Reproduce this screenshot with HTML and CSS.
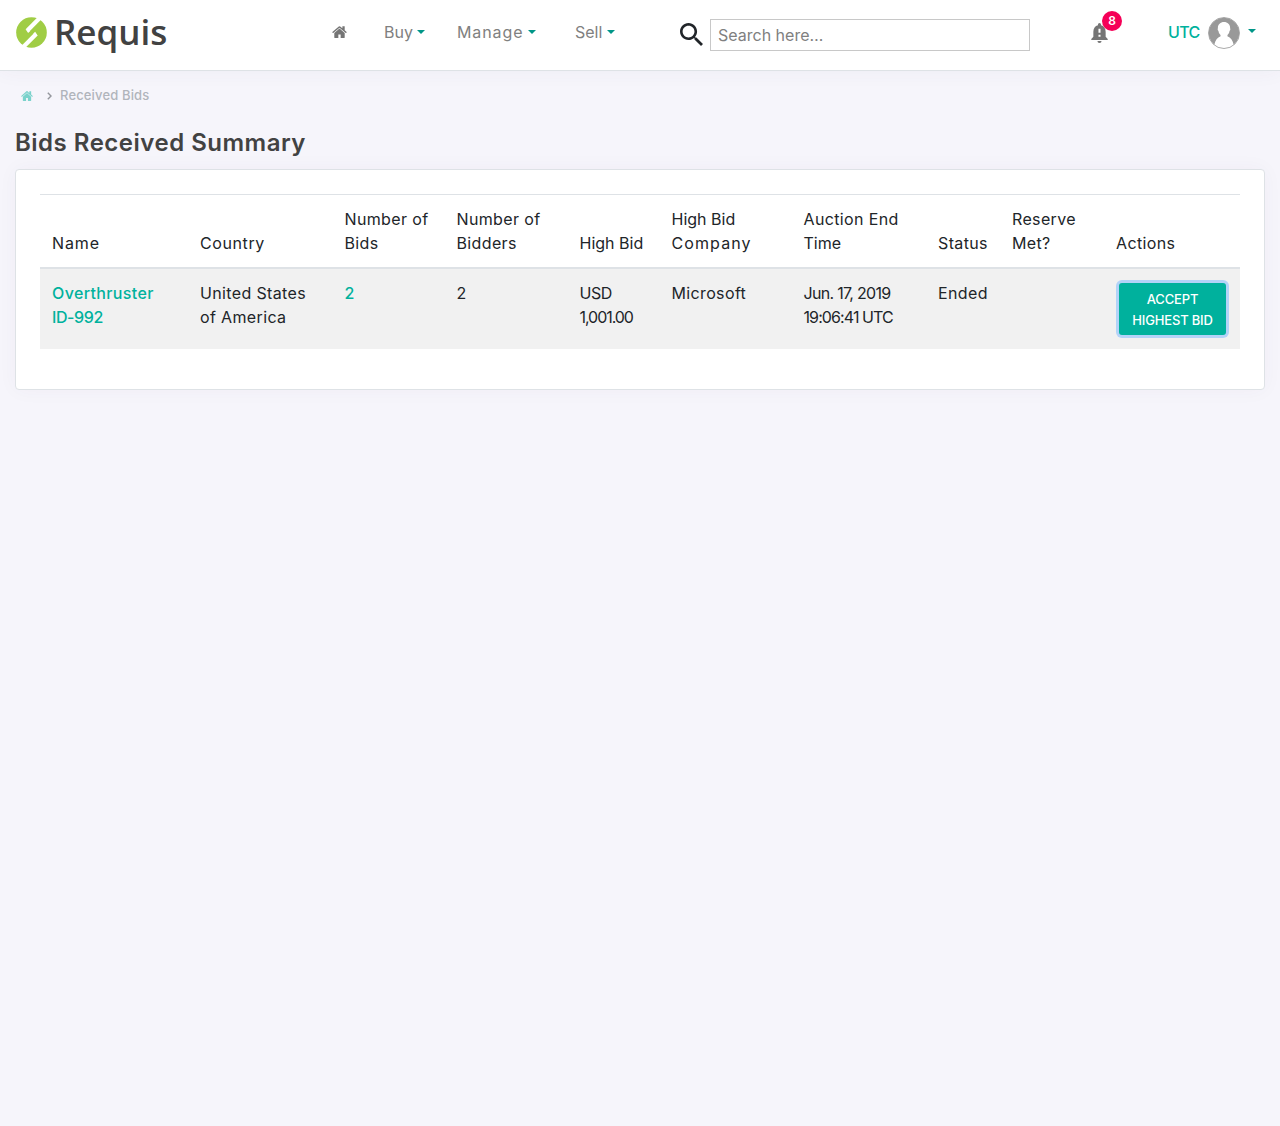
FILE: index.html
```html
<!DOCTYPE html>
<html lang="en">
<head>
<meta charset="utf-8">
<title>Bids Received Summary - Requis</title>
<link rel="stylesheet" href="styles.css">
</head>
<body>
<svg class="defs" width="0" height="0" aria-hidden="true">
  <symbol id="home" viewBox="0 110 1664 1300" preserveAspectRatio="none"><path d="M1408 864v480q0 26-19 45t-45 19H960v-384H704v384H320q-26 0-45-19t-19-45V864q0-1 .5-3t.5-3l575-474 575 474q1 2 1 6zm223-69-62 74q-8 9-21 11h-3q-13 0-21-7L832 296 140 873q-12 8-24 7-13-2-21-11l-62-74q-8-10-7-23.500t11-21.500l719-599q32-26 76-26t76 26l244 204V160q0-14 9-23t23-9h192q14 0 23 9t9 23v408l219 182q10 8 11 21.500t-7 23.500z"/></symbol>
</svg>
<header class="topbar">
  <a class="logo" href="#">
    <svg class="logo-mark" viewBox="0 0 32 32"><circle cx="16" cy="16" r="15.800" fill="#a0cd45"/><g fill="none" stroke="#fff" stroke-width="4.400"><path d="M25.500 0 11.500 14.200"/><path d="M20.800 17.600 6 32.400"/></g><path d="m10 12.700 2.500 3.800 2-2zM22.300 19.100l-2.500-3.800-2 2z" fill="#fff"/></svg>
    <span class="logo-text">Requis</span>
  </a>
  <nav class="menu">
    <a class="menu-home" href="#"><svg class="home-icon"><use href="#home"/></svg></a>
    <a class="menu-buy caret" href="#">Buy</a>
    <a class="menu-manage caret" href="#"><span class="wider">Manage</span></a>
    <a class="menu-sell caret" href="#">Sell</a>
  </nav>
  <form class="search">
    <svg class="search-icon" viewBox="3 3 17.500 17.500"><path d="M15.500 14h-.79l-.28-.27C15.410 12.590 16 11.110 16 9.500 16 5.910 13.090 3 9.500 3S3 5.910 3 9.500 5.910 16 9.500 16c1.610 0 3.090-.59 4.230-1.570l.27.28v.79l5 4.990L20.490 19l-4.990-5zm-6 0C7.010 14 5 11.990 5 9.500S7.010 5 9.500 5 14 7.010 14 9.500 11.990 14 9.500 14z"/></svg>
    <input class="search-input" type="text" placeholder="Search here…">
  </form>
  <a class="bell" href="#">
    <svg class="bell-icon" viewBox="4 2.500 16 19.500"><path fill-rule="evenodd" d="M18 16v-5c0-3.070-1.640-5.640-4.500-6.320V4a1.500 1.500 0 0 0-3 0v.68C7.630 5.360 6 7.920 6 11v5l-2 2v1h16v-1l-2-2zm-5 0h-2v-2h2v2zm0-4h-2V8h2v4zM12 22a2 2 0 0 0 2-2h-4a2 2 0 0 0 2 2z"/></svg>
    <span class="badge">8</span>
  </a>
  <a class="account caret" href="#">
    <span class="zone">UTC</span>
    <svg class="avatar" viewBox="0 0 32 32"><circle cx="16" cy="16" r="15.500" fill="#fff" stroke="#aaa"/><path fill="#999" d="M16 .8A15.200 15.200 0 0 0 6.300 27.700c1-4.200 3-7.200 6.300-8.400l-.1-1.400c-1.200-1-1.800-2.300-2-3.900-.8-.5-1.100-2-.6-2.800C9.700 7.600 12.300 5 16 5s6.300 2.600 6.100 6.200c.5.800.2 2.300-.6 2.800-.2 1.600-.8 2.900-2 3.900l-.1 1.400c3.300 1.200 5.300 4.200 6.300 8.400A15.200 15.200 0 0 0 16 .8z"/></svg>
  </a>
</header>
<main class="page">
  <div class="crumbs">
    <svg class="crumb-home"><use href="#home"/></svg>
    <svg class="crumb-sep" viewBox="0 0 5 8"><path d="m.8.800 3.200 3.200L.8 7.200"/></svg>
    <span class="crumb-text">Received Bids</span>
  </div>
  <h1 class="title">Bids Received Summary</h1>
  <section class="card">
    <table class="bids">
      <colgroup><col class="c-name"><col class="c-country"><col class="c-bids"><col class="c-bidders"><col class="c-high"><col class="c-company"><col class="c-end"><col class="c-status"><col class="c-reserve"><col class="c-actions"></colgroup>
      <thead>
        <tr><th><span class="wider">Name</span></th><th><span class="wide">Country</span></th><th>Number of<br>Bids</th><th>Number of<br>Bidders</th><th><span class="normal">High Bid</span></th><th><span class="normal">High Bid</span><br><span class="widest">Company</span></th><th>Auction End<br><span class="normal">Time</span></th><th>Status</th><th>Reserve<br>Met?</th><th>Actions</th></tr>
      </thead>
      <tbody>
        <tr><td><a class="link" href="#">Overthruster<br><span class="code">ID-992</span></a></td><td>United States<br>of America</td><td><a class="link" href="#">2</a></td><td>2</td><td><span class="code">USD</span><br><span class="amount">1,001.00</span></td><td>Microsoft</td><td><span class="date">Jun. 17, 2019</span><br><span class="time">19:06:41 UTC</span></td><td>Ended</td><td></td><td><button class="accept" type="button">ACCEPT<br>HIGHEST BID</button></td></tr>
      </tbody>
    </table>
  </section>
</main>
</body>
</html>
```
FILE: styles.css
```css
* { box-sizing: border-box; }
body { margin: 0; min-height: 1126px; background: #f6f5fb; color: #212529; font: 400 16px/24px Inter, sans-serif; }
a { color: inherit; text-decoration: none; }
.defs { display: block; height: 0; }
.topbar { display: flex; align-items: flex-start; height: 71px; background: #fff; border-bottom: 1px solid #dee2e6; box-shadow: 0 0 20px rgba(70, 50, 110, .05); }
.logo { display: flex; width: 332px; padding: 17px 0 0 16px; }
.logo-mark { width: 31px; height: 31px; }
.logo-text { margin: -5px 0 0 7px; color: #424242; font: 600 35px/40px "Open Sans", sans-serif; }
.menu { display: flex; width: 348px; padding-top: 20px; color: #808080; }
.menu a { white-space: nowrap; }
.menu-home { width: 52px; }
.menu-buy { width: 73px; }
.menu-manage { width: 118px; }
.home-icon { display: block; width: 15px; height: 12px; margin-top: 6px; fill: #757575; }
.caret::after { content: ""; display: inline-block; margin-left: 4px; vertical-align: 4px; border: 4px solid transparent; border-top-color: #009688; border-bottom: 0; }
.menu-sell::after { margin-left: 5px; }
.search { display: flex; width: 350px; padding-top: 19px; }
.search-icon { width: 23px; height: 23px; margin: 4px 7px 0 0; fill: #212529; }
.search-input { width: 320px; height: 32px; padding: 0 7px; border: 1px solid #c8c8c8; border-radius: 0; background: #fff; font: 400 16px/24px Inter, sans-serif; }
.search-input::placeholder { color: #808080; opacity: 1; }
.bell { position: relative; margin: 23px 0 0 61px; width: 77px; }
.bell-icon { display: block; width: 17px; height: 20px; fill: #757575; }
.badge { position: absolute; left: 11px; top: -12px; width: 20px; height: 20px; border-radius: 50%; background: #f50057; color: #fff; font-size: 12px; font-weight: 600; line-height: 20px; text-align: center; }
.account { display: flex; margin-top: 17px; color: #00b19d; }
.account::after { margin: 12px 0 0 8px; }
.zone { width: 40px; padding-top: 3px; font-weight: 500; letter-spacing: -.7px; }
.avatar { width: 32px; height: 32px; }
.page { padding: 0 15px; }
.crumbs { display: flex; align-items: center; height: 20px; margin-top: 15px; padding-left: 6px; opacity: .5; color: #6c757d; font-size: 13px; font-weight: 500; letter-spacing: .15px; }
.crumb-home { width: 12px; height: 10px; fill: #00b19d; }
.crumb-sep { width: 5px; height: 8px; margin: 0 8px 0 14px; fill: none; stroke: #343a40; stroke-width: 1.400; }
.crumb-text { margin-top: -2px; }
.title { margin: 22px 0 11px; color: #424242; font-size: 24px; font-weight: 600; line-height: 30px; letter-spacing: .5px; }
.card { height: 221px; padding: 24px; border: 1px solid #dee2e6; border-radius: 4px; background: #fff; box-shadow: 0 0 20px rgba(70, 50, 110, .04); }
.bids { width: 1200px; table-layout: fixed; border-collapse: separate; border-spacing: 0; white-space: nowrap; letter-spacing: .36px; }
.bids th, .bids td { height: 80px; padding: 12px; text-align: left; vertical-align: top; font-weight: 400; }
.bids th { height: 75px; border-top: 1px solid #dee2e6; border-bottom: 2px solid #dee2e6; vertical-align: bottom; }
.bids td { background: #f1f1f1; }
.c-name { width: 148px; }
.c-country { width: 144.500px; }
.c-bids { width: 112px; }
.c-bidders { width: 123px; }
.c-high { width: 92px; }
.c-company { width: 132px; }
.c-end { width: 134.500px; }
.c-status { width: 74px; }
.c-reserve { width: 104px; }
.c-actions { width: 136px; }
.normal { letter-spacing: 0; }
.wide { letter-spacing: .6px; }
.wider { letter-spacing: .9px; }
.menu .wider { margin-right: 1px; }
.widest { letter-spacing: 1.100px; }
.code { letter-spacing: -.4px; }
.amount { letter-spacing: -1.050px; }
.date { letter-spacing: -.7px; }
.time { letter-spacing: -.9px; }
.link { color: #00b19d; font-weight: 500; }
.accept { display: block; width: 107px; height: 52px; margin: 2px 0 0 3px; padding: 2px 0 0; border: 0; border-radius: 3px; background: #00b19d; box-shadow: 0 0 0 3px #b3d3f8; color: #fff; font: 500 13px/21px Inter, sans-serif; letter-spacing: -.17px; }
```
